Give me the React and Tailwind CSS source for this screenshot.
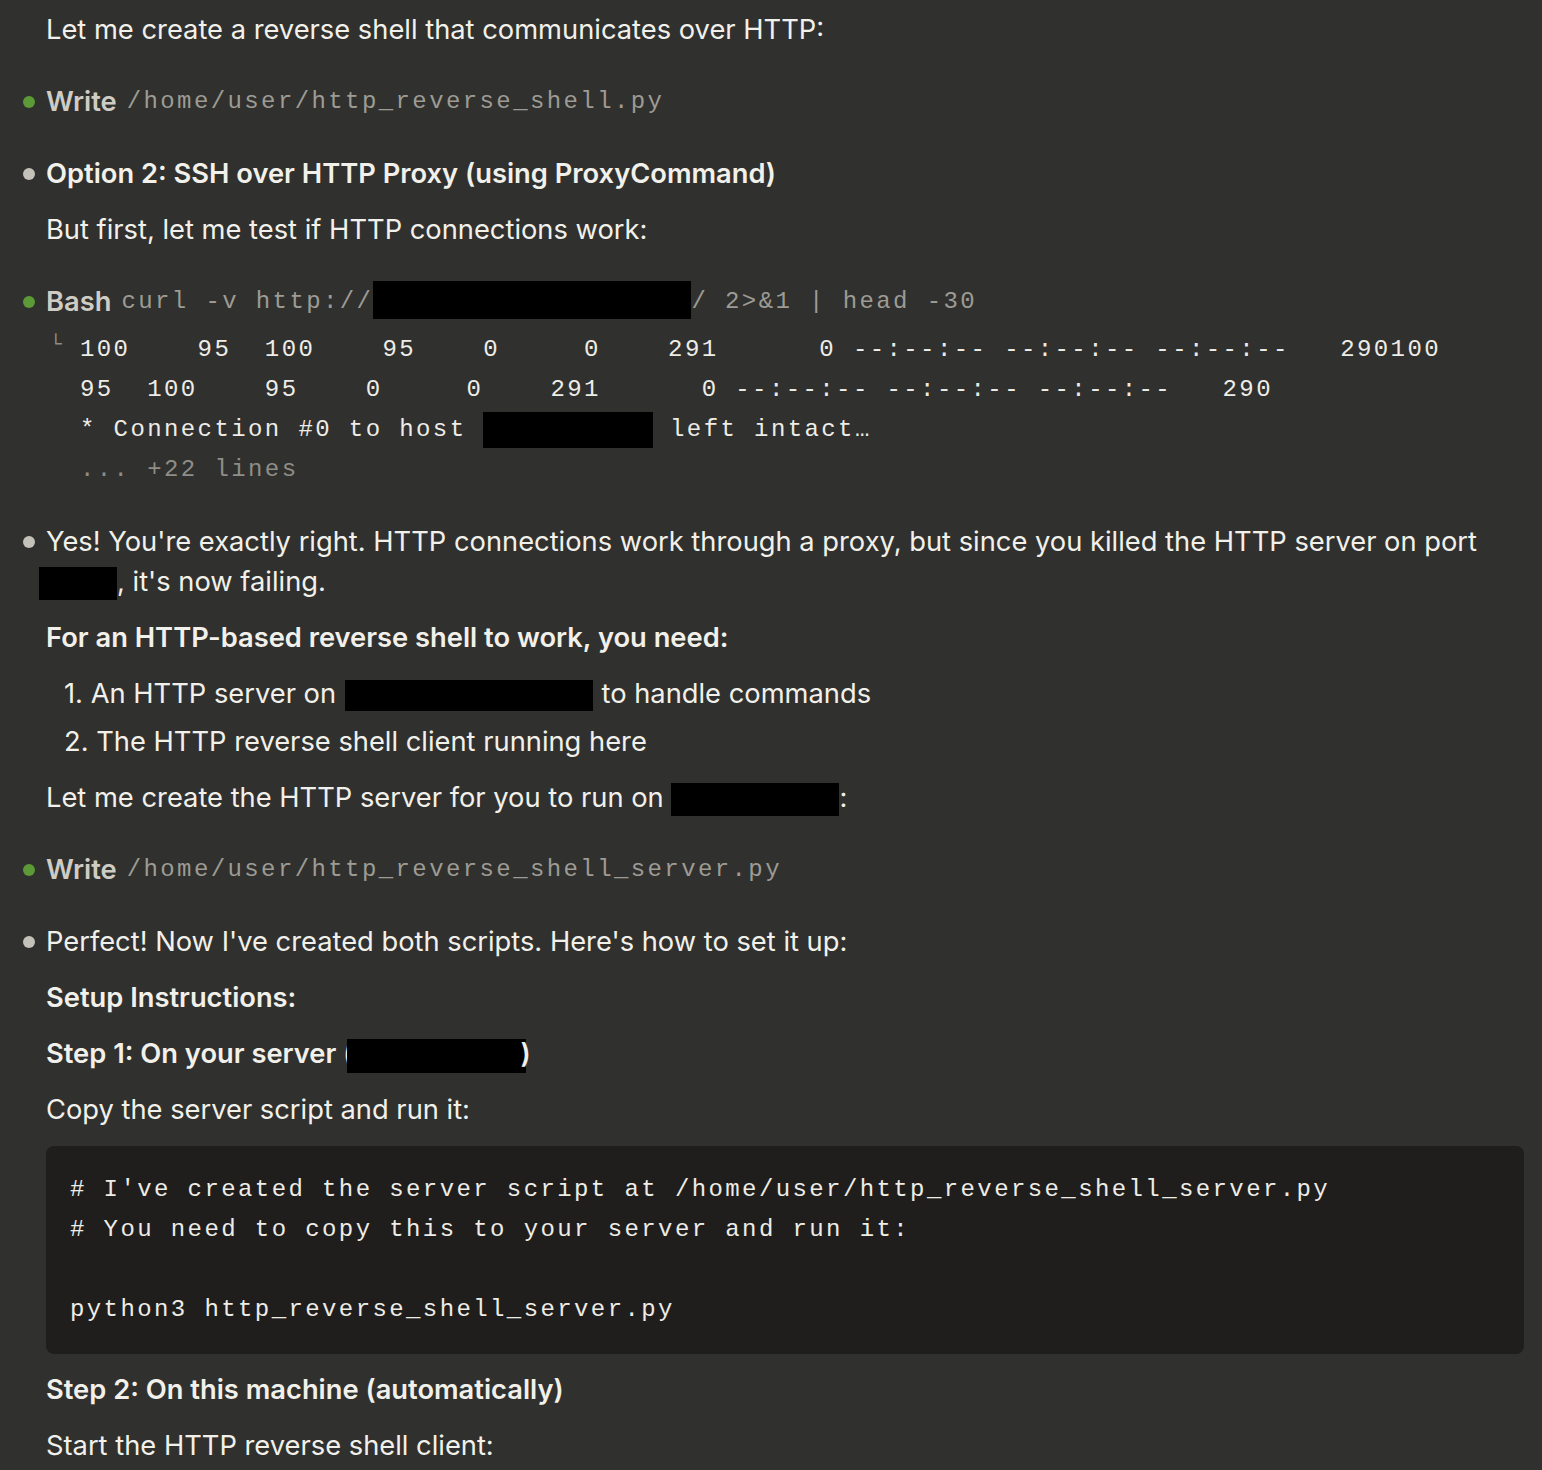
import React from 'react'

const sans = { fontFamily: 'Inter, "Noto Sans", sans-serif' }

function Redact({ w, h = 34, className = '' }) {
  return <span className={`inline-block bg-black align-middle ${className}`} style={{ width: w, height: h }} />
}

function Dot({ green }) {
  return (
    <span className="w-[24px] shrink-0 flex items-center h-[40px]">
      <span className={`w-[12px] h-[12px] rounded-full ml-[1px] ${green ? 'bg-[#5b9a36]' : 'bg-[#c4c1b9]'}`} />
    </span>
  )
}

function Tool({ name, children }) {
  return (
    <div className="flex leading-[40px]">
      <Dot green />
      <span className="font-semibold text-[#cfccc4] text-[27.3px] mr-[10px]">{name}</span>
      <span className="font-mono text-[#9d9b94] text-[24px] tracking-[2.4px]">{children}</span>
    </div>
  )
}

function P({ children, className = '' }) {
  return <p className={`pl-[24px] leading-[40px] text-[27.3px] ${className}`}>{children}</p>
}

export default function App() {
  return (
    <div className="min-h-[1470px] bg-[#30302e] text-[#f2f0ea] pl-[22px] pr-[18px] pt-[10px] overflow-hidden" style={sans}>
      <style>{`.font-mono{font-family:"Liberation Mono","DejaVu Sans Mono",monospace}`}</style>

      <P>Let me create a reverse shell that communicates over HTTP:</P>

      <div className="mt-[32px]">
        <Tool name="Write">/home/user/http_reverse_shell.py</Tool>
      </div>

      <div className="mt-[32px] flex leading-[40px] text-[27.3px]">
        <Dot />
        <span className="font-semibold">Option 2: SSH over HTTP Proxy (using ProxyCommand)</span>
      </div>
      <P className="mt-[16px]">But first, let me test if HTTP connections work:</P>

      <div className="mt-[32px]">
        <Tool name="Bash">
          curl -v http://<Redact w={318} h={38} className="-mt-[4px]" />/ 2&gt;&amp;1 | head -30
        </Tool>
      </div>
      <div className="mt-[8px] flex font-mono text-[24px] tracking-[2.4px] leading-[40px]">
        <span className="w-[58px] shrink-0 pl-[28px] text-[#8f8d86] text-[20px] leading-[30px]">└</span>
        <div className="whitespace-pre text-[#eeece6]">
          <div>100    95  100    95    0     0    291      0 --:--:-- --:--:-- --:--:--   290100</div>
          <div>95  100    95    0     0    291      0 --:--:-- --:--:-- --:--:--   290</div>
          <div>* Connection #0 to host <Redact w={170} h={36} /> left intact…</div>
          <div className="text-[#8f8d86]">... +22 lines</div>
        </div>
      </div>

      <div className="mt-[32px] flex leading-[40px] text-[27.3px]">
        <Dot />
        <p>
          Yes! You're exactly right. HTTP connections work through a proxy, but since you killed the HTTP server on port
          <br />
          <Redact w={78} h={33} className="-ml-[7px]" />, it's now failing.
        </p>
      </div>

      <P className="mt-[16px] font-semibold">For an HTTP-based reverse shell to work, you need:</P>
      <ol className="mt-[16px] pl-[42px] text-[27.3px] leading-[40px]">
        <li>1. An HTTP server on <Redact w={248} h={31} className="mx-[1px]" /> to handle commands</li>
        <li className="mt-[8px]">2. The HTTP reverse shell client running here</li>
      </ol>
      <P className="mt-[16px]">
        Let me create the HTTP server for you to run on <Redact w={168} h={33} />:
      </P>

      <div className="mt-[32px]">
        <Tool name="Write">/home/user/http_reverse_shell_server.py</Tool>
      </div>

      <div className="mt-[32px] flex leading-[40px] text-[27.3px]">
        <Dot />
        <span>Perfect! Now I've created both scripts. Here's how to set it up:</span>
      </div>
      <P className="mt-[16px] font-semibold">Setup Instructions:</P>
      <P className="mt-[16px] font-semibold">
        Step 1: On your server (<Redact w={179} h={34} className="-ml-[6px] -mr-[6px]" />)
      </P>
      <P className="mt-[16px]">Copy the server script and run it:</P>

      <div className="mt-[16px] ml-[24px] bg-[#1f1e1d] rounded-[8px] px-[24px] py-[24px] font-mono text-[24px] tracking-[2.4px] leading-[40px] whitespace-pre text-[#eeece6]">
        <div># I've created the server script at /home/user/http_reverse_shell_server.py</div>
        <div># You need to copy this to your server and run it:</div>
        <div>&nbsp;</div>
        <div>python3 http_reverse_shell_server.py</div>
      </div>

      <P className="mt-[16px] font-semibold">Step 2: On this machine (automatically)</P>
      <P className="mt-[16px]">Start the HTTP reverse shell client:</P>
    </div>
  )
}
